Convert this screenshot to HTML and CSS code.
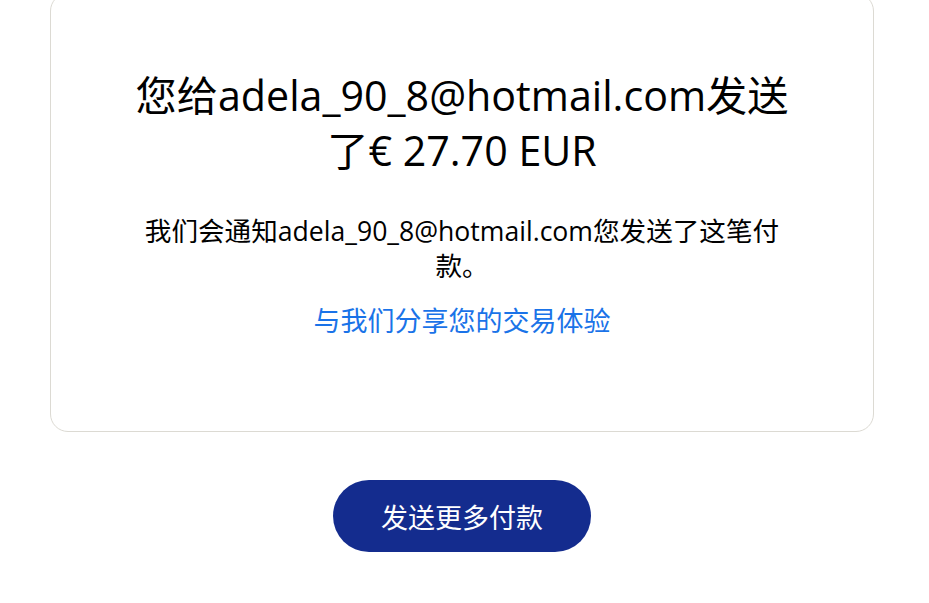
FILE: index.html
```html
<!DOCTYPE html>
<html lang="zh-CN">
<head>
  <meta charset="UTF-8">
  <meta name="viewport" content="width=device-width, initial-scale=1.0">
  <title>付款已发送</title>
  <link rel="stylesheet" href="styles.css">
</head>
<body>
  <main class="page">
    <section class="card">
      <h1 class="title">您给adela_90_8@hotmail.com发送了€ 27.70 EUR</h1>
      <p class="note">我们会通知adela_90_8@hotmail.com您发送了这笔付款。</p>
      <a class="feedback" href="#">与我们分享您的交易体验</a>
    </section>
    <div class="actions">
      <a class="btn-primary" href="#">发送更多付款</a>
    </div>
  </main>
</body>
</html>
```

FILE: styles.css
```css
body {
  margin: 0;
  padding: 0;
  background: #ffffff;
  color: #000000;
  font-family: 'Open Sans', 'Noto Sans CJK SC', sans-serif;
}
.page {
  width: 824px;
  margin: 0 0 0 50px;
}
.card {
  margin-top: -7px;
  padding: 74px 84px 93px;
  border: 1px solid #dcdad3;
  border-radius: 18px;
  display: flex;
  flex-direction: column;
  align-items: center;
  text-align: center;
}
.title {
  margin: 0;
  font-size: 41.2px;
  font-weight: 400;
  line-height: 55px;
}
.note {
  margin: 36px 0 0;
  font-size: 26.6px;
  line-height: 35px;
}
.feedback {
  margin-top: 19px;
  font-size: 27px;
  line-height: 35px;
  color: #1a73e8;
  text-decoration: none;
}
.actions {
  display: flex;
  justify-content: center;
  margin-top: 48px;
}
.btn-primary {
  display: flex;
  align-items: center;
  justify-content: center;
  width: 258px;
  height: 72px;
  border-radius: 36px;
  background: #142c8e;
  color: #ffffff;
  font-size: 27px;
  text-decoration: none;
}
```
